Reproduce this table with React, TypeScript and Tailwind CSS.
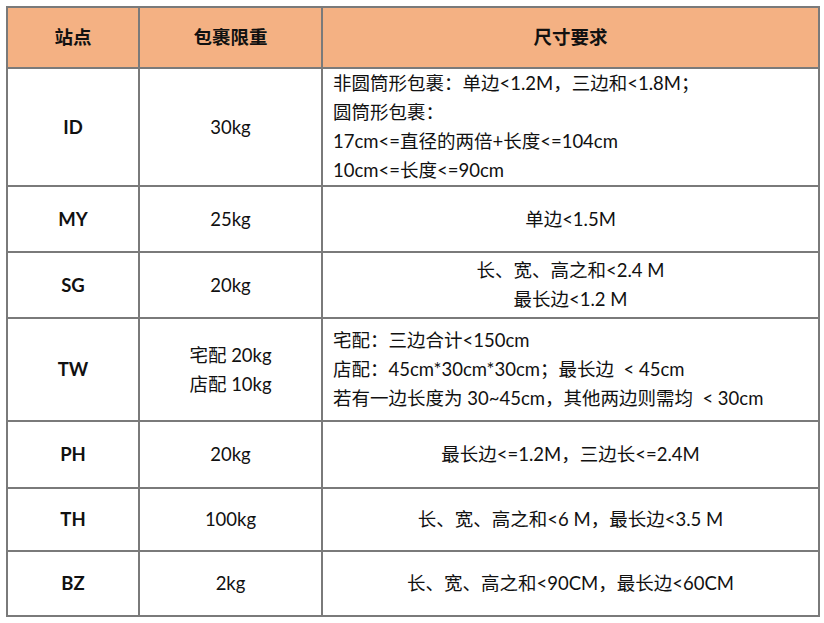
import React from 'react';

type Row = {
  site: string;
  weight: string[];
  size: string[];
  align: 'left' | 'center';
  h: string;
};

const rows: Row[] = [
  {
    site: 'ID',
    weight: ['30kg'],
    size: [
      '非圆筒形包裹：单边<1.2M，三边和<1.8M；',
      '圆筒形包裹：',
      '17cm<=直径的两倍+长度<=104cm',
      '10cm<=长度<=90cm',
    ],
    align: 'left',
    h: 'h-[116px]',
  },
  { site: 'MY', weight: ['25kg'], size: ['单边<1.5M'], align: 'center', h: 'h-[66px]' },
  {
    site: 'SG',
    weight: ['20kg'],
    size: ['长、宽、高之和<2.4 M', '最长边<1.2 M'],
    align: 'center',
    h: 'h-[66px]',
  },
  {
    site: 'TW',
    weight: ['宅配 20kg', '店配 10kg'],
    size: [
      '宅配：三边合计<150cm',
      '店配：45cm*30cm*30cm；最长边 \u00a0< 45cm',
      '若有一边长度为 30~45cm，其他两边则需均 \u00a0< 30cm',
    ],
    align: 'left',
    h: 'h-[103px]',
  },
  { site: 'PH', weight: ['20kg'], size: ['最长边<=1.2M，三边长<=2.4M'], align: 'center', h: 'h-[67px]' },
  { site: 'TH', weight: ['100kg'], size: ['长、宽、高之和<6 M，最长边<3.5 M'], align: 'center', h: 'h-[63px]' },
  { site: 'BZ', weight: ['2kg'], size: ['长、宽、高之和<90CM，最长边<60CM'], align: 'center', h: 'h-[65px]' },
];

export default function App() {
  return (
    <div
      className="w-[824px] h-[623px] bg-white pt-[6px] pl-[6px] text-[#111]"
      style={{ fontFamily: 'Lato, "Noto Sans CJK SC", sans-serif' }}
    >
      <table className="border-collapse table-fixed w-[812px] text-[18.5px] leading-[29px]">
        <colgroup>
          <col className="w-[132px]" />
          <col className="w-[183px]" />
          <col className="w-[497px]" />
        </colgroup>
        <thead>
          <tr className="h-[61px] bg-[#f4b183]">
            <th className="border-2 border-[#7a7a7a] font-bold text-center">站点</th>
            <th className="border-2 border-[#7a7a7a] font-bold text-center">包裹限重</th>
            <th className="border-2 border-[#7a7a7a] font-bold text-center">尺寸要求</th>
          </tr>
        </thead>
        <tbody>
          {rows.map((r) => (
            <tr key={r.site} className={r.h}>
              <td className="border-2 border-[#7a7a7a] text-center font-bold">{r.site}</td>
              <td className="border-2 border-[#7a7a7a] text-center">
                {r.weight.map((w) => (
                  <div key={w}>{w}</div>
                ))}
              </td>
              <td
                className={
                  r.align === 'left'
                    ? 'border-2 border-[#7a7a7a] text-left pl-[10px]'
                    : 'border-2 border-[#7a7a7a] text-center'
                }
              >
                {r.size.map((s) => (
                  <div key={s} className="whitespace-nowrap">{s}</div>
                ))}
              </td>
            </tr>
          ))}
        </tbody>
      </table>
    </div>
  );
}
